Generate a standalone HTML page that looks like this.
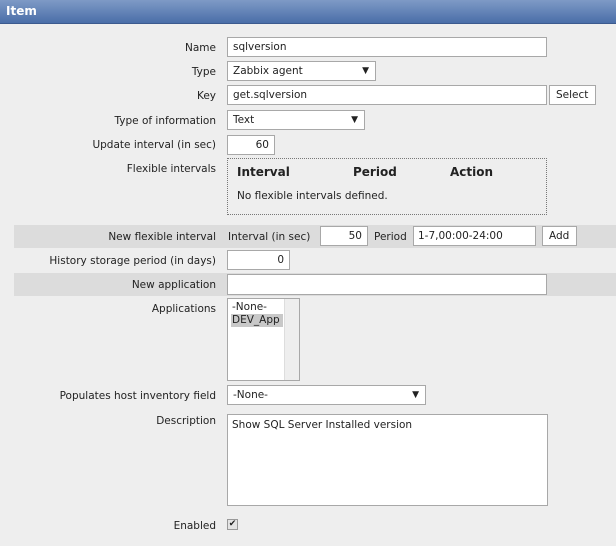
<!DOCTYPE html>
<html><head><style>
body{margin:0;width:616px;height:546px;background:#eeeeee;font-family:"DejaVu Sans","Liberation Sans",sans-serif;font-size:10.5px;color:#222;position:relative;overflow:hidden}
.a{position:absolute}
.hd{left:0;top:0;width:616px;height:24px;background:linear-gradient(#7e9ac6,#4a6ea8);border-bottom:1px solid #3c5a8e;color:#fff;font-weight:bold;font-size:12px;line-height:23px;padding-left:6px;box-sizing:border-box}
.l{right:400px;text-align:right;white-space:nowrap;line-height:14px}
.in{background:#fff;border:1px solid #a8a8a8;box-sizing:border-box;padding-left:5px;line-height:19px;white-space:nowrap}
.r{text-align:right;padding-right:5px}
.sh{left:14px;width:602px;background:#dcdcdc}
.arr{position:absolute;right:6px;top:0;font-size:9px}
.t{line-height:14px}
</style></head><body>
<div class="a hd">Item</div>
<div class="a l" style="top:41px">Name</div>
<div class="a in" style="left:227px;top:37px;width:320px;height:20px">sqlversion</div>
<div class="a l" style="top:65px">Type</div>
<div class="a in" style="left:227px;top:61px;width:149px;height:20px">Zabbix agent<span class="arr">▼</span></div>
<div class="a l" style="top:89px">Key</div>
<div class="a in" style="left:227px;top:85px;width:320px;height:20px">get.sqlversion</div>
<div class="a in" style="left:549px;top:85px;width:47px;height:20px;padding-left:6px">Select</div>
<div class="a l" style="top:114px">Type of information</div>
<div class="a in" style="left:227px;top:110px;width:138px;height:20px">Text<span class="arr">▼</span></div>
<div class="a l" style="top:138px">Update interval (in sec)</div>
<div class="a in r" style="left:227px;top:135px;width:48px;height:20px">60</div>
<div class="a l" style="top:162px">Flexible intervals</div>
<div class="a" style="left:227px;top:158px;width:320px;height:57px;border:1px dotted #777;box-sizing:border-box"></div>
<div class="a t" style="left:237px;top:165px;font-weight:bold;font-size:12px">Interval</div>
<div class="a t" style="left:353px;top:165px;font-weight:bold;font-size:12px">Period</div>
<div class="a t" style="left:450px;top:165px;font-weight:bold;font-size:12px">Action</div>
<div class="a t" style="left:237px;top:189px">No flexible intervals defined.</div>
<div class="a sh" style="top:225px;height:23px"></div>
<div class="a l" style="top:230px">New flexible interval</div>
<div class="a t" style="left:228px;top:230px">Interval (in sec)</div>
<div class="a in r" style="left:320px;top:226px;width:48px;height:20px">50</div>
<div class="a t" style="left:374px;top:230px">Period</div>
<div class="a in" style="left:413px;top:226px;width:123px;height:20px;padding-left:4px">1-7,00:00-24:00</div>
<div class="a in" style="left:542px;top:226px;width:35px;height:20px;padding-left:6px">Add</div>
<div class="a l" style="top:254px">History storage period (in days)</div>
<div class="a in r" style="left:227px;top:250px;width:63px;height:20px">0</div>
<div class="a sh" style="top:273px;height:23px"></div>
<div class="a l" style="top:278px">New application</div>
<div class="a in" style="left:227px;top:274px;width:320px;height:21px"></div>
<div class="a l" style="top:302px">Applications</div>
<div class="a" style="left:227px;top:298px;width:73px;height:83px;background:#fff;border:1px solid #a8a8a8;box-sizing:border-box">
<div class="a" style="left:56px;top:0;width:14px;height:81px;background:#eee;border-left:1px solid #ddd"></div>
<div class="a" style="left:4px;top:2px;line-height:13px">-None-</div>
<div class="a" style="left:3px;top:15px;width:52px;background:#c8c8c8;line-height:13px;padding-left:1px;box-sizing:border-box">DEV_App</div>
</div>
<div class="a l" style="top:389px">Populates host inventory field</div>
<div class="a in" style="left:227px;top:385px;width:199px;height:20px">-None-<span class="arr">▼</span></div>
<div class="a l" style="top:414px">Description</div>
<div class="a" style="left:227px;top:414px;width:321px;height:92px;background:#fff;border:1px solid #a8a8a8;box-sizing:border-box;padding:3px 4px;line-height:14px">Show SQL Server Installed version</div>
<div class="a l" style="top:519px">Enabled</div>
<div class="a" style="left:227px;top:519px;width:11px;height:11px;border:1px solid #999;background:#e4e4e4;box-sizing:border-box;font-size:9px;line-height:9px;text-align:center">✔</div>
</body></html>
